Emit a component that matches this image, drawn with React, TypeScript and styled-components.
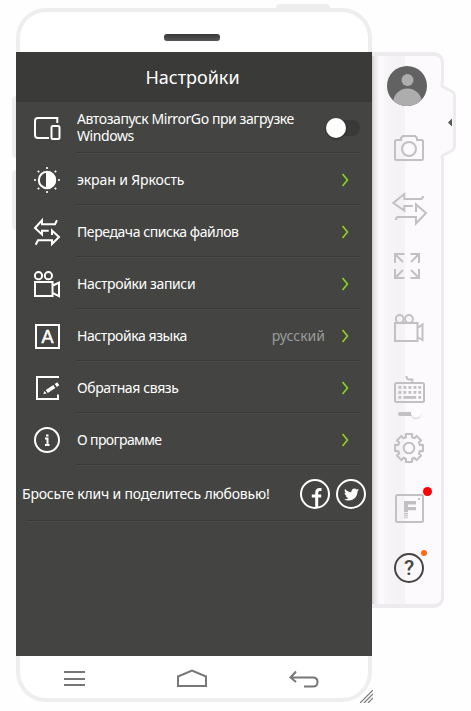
import React from 'react';
import styled, { createGlobalStyle } from 'styled-components';
import { FaTwitter } from 'react-icons/fa';

const GlobalStyle = createGlobalStyle`
* { box-sizing: border-box; }
body {
margin: 0;
background-color: #fefefe;
font-family: "Noto Sans", "Open Sans", sans-serif;
overflow: hidden;
}
svg { display: block; flex: none; }
`;
const Desktop = styled.div`
display: flex;
align-items: flex-start;
width: 471px;
height: 711px;
padding: 8px 0 0 16px;
`;
const Phone = styled.div`
position: relative;
display: flex;
flex-direction: column;
width: 356px;
height: 694px;
border-radius: 30px;
background-color: #fff;
box-shadow: inset 0 0 0 4px #eee;
`;
const SideButton = styled.div<{ $top: number; $height: number }>`
position: absolute;
left: -4px;
top: ${p => p.$top}px;
width: 4px;
height: ${p => p.$height}px;
border-radius: 4px 0 0 4px;
background-color: #eee;
`;
const PowerButton = styled.div`
position: absolute;
left: 260px;
top: -4px;
width: 54px;
height: 4px;
border-radius: 4px 4px 0 0;
background-color: #eee;
`;
const Forehead = styled.div`
display: flex;
justify-content: center;
height: 44px;
padding: 26px 4px 0 0;
`;
const Speaker = styled.div`
width: 56px;
height: 7px;
border-radius: 3px;
background: linear-gradient(#383838, #555);
`;
const Screen = styled.div`
position: relative;
height: 604px;
background-color: #444542;
`;
const Header = styled.div`
display: flex;
align-items: center;
justify-content: center;
height: 50px;
padding-right: 3px;
background-color: #3a3b38;
color: #fff;
font-size: 18px;
`;
const Row = styled.div`
display: flex;
align-items: center;
height: 52px;
padding: 0 11px 0 17px;
`;
const RowBody = styled.div`
display: flex;
align-items: center;
flex: 1;
height: 52px;
margin-left: 15px;
padding: 0 12px 0 1px;
border-bottom: 1px solid #4b4c49;
box-shadow: inset 0 -1px #393a38;
`;
const Label = styled.div<{ $spacing: number; $lift?: number }>`
flex: 1;
padding-bottom: ${p => p.$lift || 0}px;
color: #fff;
font-size: 14px;
line-height: 17px;
letter-spacing: ${p => p.$spacing}px;
white-space: pre;
`;
const Value = styled.div`
margin-right: 16px;
color: #9b9b9b;
font-size: 14px;
line-height: 17px;
`;
const Switch = styled.div`
display: flex;
align-items: center;
width: 34px;
height: 16px;
margin-right: -11px;
border-radius: 8px;
background-color: #393938;
`;
const Knob = styled.div`
width: 20px;
height: 20px;
border-radius: 50%;
background-color: #fff;
box-shadow: 0 1px 2px rgba(0, 0, 0, 0.4);
`;
const ShareRow = styled.div`
display: flex;
align-items: center;
gap: 6px;
height: 56px;
margin-left: 6px;
padding-right: 6px;
background: linear-gradient(#393a38, #393a38) 4px 54px / 335px 1px no-repeat, linear-gradient(#4b4c49, #4b4c49) 4px 55px / 335px 1px no-repeat;
`;
const SocialButton = styled.div`
display: flex;
align-items: center;
justify-content: center;
width: 30px;
height: 30px;
border: 2px solid #fff;
border-radius: 50%;
color: #fff;
`;
const NavBar = styled.div`
display: grid;
grid-template-columns: 113px 112px 30px;
align-items: center;
height: 46px;
padding-left: 48px;
`;
const Grip = styled.svg`
position: absolute;
right: -1px;
bottom: -1px;
`;
const Rail = styled.div`
position: relative;
display: flex;
flex-direction: column;
width: 72px;
height: 556px;
margin-top: 44px;
padding: 10px 0 0 19px;
border: solid #eeebee;
border-width: 4px 3px 4px 0;
border-radius: 0 10px 10px 0;
background: linear-gradient(90deg, #c9c8c9 0, #e6e4e6 2px, #f1eef1 5px, #fbf9fb 7px, #fdfafd 12px, #f8f5f8 12px, #f5f2f5 27px, #f6f3f6 33px, #fcf9fc 33px, #fdfafe 48px);
`;
const RailHandle = styled.svg`
position: absolute;
left: 68px;
top: 25px;
`;
const Avatar = styled.div`
width: 40px;
height: 40px;
margin-left: -4px;
`;
const RailItem = styled.div<{ $gap: number }>`
position: relative;
display: flex;
align-items: center;
justify-content: center;
flex: none;
width: 36px;
height: 36px;
margin-top: ${p => p.$gap}px;
`;
const MiniSwitch = styled.div`
display: flex;
align-items: center;
width: 20px;
height: 4px;
margin: 5px 0 -4px 7px;
border-radius: 2px;
background: linear-gradient(#c2c0c2, #c2c0c2) 0 0 / 14px 4px no-repeat;
`;
const MiniKnob = styled.div`
flex: none;
width: 10px;
height: 10px;
margin: -2px 0 0 13px;
border-radius: 50%;
background-color: #fff;
box-shadow: 0 1px 1px #ccc;
`;
const HelpRing = styled.div`
display: flex;
align-items: center;
justify-content: center;
width: 30px;
height: 30px;
border: 2px solid #444542;
border-radius: 50%;
color: #444542;
font: 500 21px/26px Roboto, sans-serif;
`;
const Dot = styled.div<{ $size: number; $color: string; $x: number; $y: number }>`
position: absolute;
left: ${p => p.$x}px;
top: ${p => p.$y}px;
width: ${p => p.$size}px;
height: ${p => p.$size}px;
border-radius: 50%;
background-color: ${p => p.$color};
`;

const RowIcon = ({ children }: { children: React.ReactNode }) => (
    <svg width="28" height="28" fill="none" stroke="#fff" strokeWidth="2">{children}</svg>
);
const RailIcon = ({ children }: { children: React.ReactNode }) => (
    <svg width="36" height="36" fill="none" stroke="#c2c0c2" strokeWidth="2">{children}</svg>
);
const Chevron = () => (
    <svg width="8" height="14" fill="none" stroke="#8fd41b" strokeWidth="1.6">
        <path d="M1.5 1l5 6-5 6" />
    </svg>
);

const DevicesIcon = () => (
    <RowIcon>
        <path d="M24.3 9V4H5a3 3 0 0 0-3 3V21a3 3 0 0 0 3 3h11" />
        <rect x="18.500" y="12" width="8" height="13" rx="1.5" />
    </RowIcon>
);
const rays = [0, 45, 90, 135, 180, 225, 270, 315];
const BrightnessIcon = () => (
    <RowIcon>
        <circle cx="14" cy="14" r="8.2" />
        <path d="M14 6a8 8 0 0 1 0 16z" fill="#fff" />
        {rays.map(a => (
            <rect key={a} x="13.1" y="1.1" width="1.8" height="1.8" fill="#fff" stroke="none" transform={`rotate(${a} 14 14)`} />
        ))}
    </RowIcon>
);
const TransferIcon = () => (
    <RowIcon>
        <path d="M24 2.3l-2 4H9v-4L2 10l7 6.5v-3.8h6.7M2.7 26.7l2.3-4.4h14V26l7-7-7-6.5V17" />
    </RowIcon>
);
const RecordIcon = () => (
    <RowIcon>
        <circle cx="5.5" cy="5.7" r="3.6" />
        <circle cx="15.4" cy="5.7" r="3.6" />
        <path d="M2 12h17.5v14H2zM20 15.5l6-3v13.7l-6-3" />
    </RowIcon>
);
const LanguageIcon = () => (
    <RowIcon>
        <rect x="3" y="3" width="23" height="23" />
        <text x="14.5" y="21" textAnchor="middle" fill="#fff" stroke="#fff" strokeWidth=".5" fontFamily="Liberation Sans, sans-serif" fontSize="18">A</text>
    </RowIcon>
);
const FeedbackIcon = () => (
    <RowIcon>
        <path d="M26 3H4v22h21v-4.5" />
        <path d="M13.8 17.5l7.5-5M22.8 11.5l2.5-1.7" strokeWidth="3.6" />
        <path d="M10.2 20l1.4-3 2 2.5z" fill="#fff" stroke="none" />
    </RowIcon>
);
const AboutIcon = () => (
    <RowIcon>
        <circle cx="14" cy="14" r="12" />
        <path d="M12 12.5h2.5V19M12 19h4.5M13 9.5h2.5" />
    </RowIcon>
);

const gearPath = () => {
    const points: string[] = [];
    for (let i = 0; i < 8; i++) {
        [[-15.5, 11.2], [-13, 14.3], [13, 14.3], [15.5, 11.2]].forEach(([deg, r]) => {
            const a = ((i * 45 + deg - 90) * Math.PI) / 180;
            points.push(`${(18 + r * Math.cos(a)).toFixed(2)} ${(18 + r * Math.sin(a)).toFixed(2)}`);
        });
    }
    return `M${points.join('L')}z`;
};
const keyColumns = [7.5, 12.5, 17.5, 22.5, 27.3];

const rows = [
    { label: 'экран и Яркость', icon: <BrightnessIcon />, spacing: -0.12 },
    { label: 'Передача списка файлов', icon: <TransferIcon />, spacing: -0.42 },
    { label: 'Настройки записи', icon: <RecordIcon />, spacing: -0.38 },
    { label: 'Настройка языка', icon: <LanguageIcon />, spacing: -0.42, value: 'русский' },
    { label: 'Обратная связь', icon: <FeedbackIcon />, spacing: -0.4 },
    { label: 'О программе', icon: <AboutIcon />, spacing: -0.62 },
];

const Settings = () => (
    <Screen>
        <Header>Настройки</Header>
        <Row>
            <DevicesIcon />
            <RowBody>
                <Label $spacing={-0.42} $lift={2}>{'Автозапуск MirrorGo при загрузке\nWindows'}</Label>
                <Switch><Knob /></Switch>
            </RowBody>
        </Row>
        {rows.map(row => (
            <Row key={row.label}>
                {row.icon}
                <RowBody>
                    <Label $spacing={row.spacing}>{row.label}</Label>
                    {row.value && <Value>{row.value}</Value>}
                    <Chevron />
                </RowBody>
            </Row>
        ))}
        <ShareRow>
            <Label $spacing={-0.19} $lift={2}>Бросьте клич и поделитесь любовью!</Label>
            <SocialButton>
                <svg width="26" height="26" fill="none" stroke="#fff" strokeWidth="3">
                    <path d="M19.5 8.5h-1.8q-3 0-3 3.2V26M9.8 15h9.4" />
                </svg>
            </SocialButton>
            <SocialButton><FaTwitter size={15} /></SocialButton>
        </ShareRow>
    </Screen>
);

const SideRail = () => (
    <Rail>
        <RailHandle width="16" height="82">
            <path d="M0 4L4 6 12 10.500Q14.500 12 14.500 15V65Q14.500 68 12 69.500L4 74 0 77z" fill="#fdfafe" />
            <path d="M2 2v3L12 10.500Q14.500 12 14.500 15V65Q14.500 68 12 69.500L2 75v3" fill="none" stroke="#eeebee" strokeWidth="3" />
            <path d="M8 41.500l4-4v8z" fill="#555" />
        </RailHandle>
        <Avatar>
            <svg width="40" height="40">
                <clipPath id="face"><circle cx="20" cy="20" r="20" /></clipPath>
                <g clipPath="url(#face)">
                    <rect width="40" height="40" fill="#626262" />
                    <circle cx="20.500" cy="14" r="6" fill="#adadad" />
                    <circle cx="20.500" cy="37" r="14.500" fill="#adadad" />
                </g>
            </svg>
        </Avatar>
        <RailItem $gap={24}>
            <RailIcon>
                <path d="M5.500 10H10V8l2-2h12l2 2v2h4.500a1.500 1.500 0 0 1 1.500 1.500v17a1.500 1.500 0 0 1-1.500 1.500h-25A1.500 1.500 0 0 1 4 28.500v-17A1.500 1.500 0 0 1 5.500 10z" />
                <circle cx="18" cy="19" r="7" />
            </RailIcon>
        </RailItem>
        <RailItem $gap={24}>
            <RailIcon>
                <path d="M32 6q0 3-2.500 3H13.300V4L2.300 13l11 7.500V16h8.500M5 30q0-3 2-3h18v6.500L35 23l-10-8.500V22" />
            </RailIcon>
        </RailItem>
        <RailItem $gap={22}>
            <RailIcon>
                <path d="M13.500 6H4v9M4 6l8 8M19.500 6H28v9M28 6l-8 8M4 21v9h9.500M4 30l8-8M28 21v9h-8.500M28 30l-8-8" />
            </RailIcon>
        </RailItem>
        <RailItem $gap={26}>
            <RailIcon>
                <circle cx="8.700" cy="9" r="3.900" />
                <circle cx="18" cy="9" r="3.900" />
                <path d="M4 13h22.500v18H4zM26.500 18l5-3.500V30l-5-3" />
            </RailIcon>
        </RailItem>
        <RailItem $gap={25}>
            <RailIcon>
                <rect x="4" y="12" width="29" height="19" rx="1.500" />
                <path d="M21.300 12V8.500H17.500q-2-.500-2-3.500" />
                <g fill="#c2c0c2" stroke="none">
                    {keyColumns.map(x => <rect key={x} x={x} y="15" width="2.800" height="2.800" />)}
                    {keyColumns.map(x => <rect key={x} x={x} y="20" width="2.800" height="2.800" />)}
                    <rect x="7.500" y="25" width="2.800" height="2.800" />
                    <rect x="12.500" y="25" width="12.700" height="2.800" />
                    <rect x="27.300" y="25" width="2.800" height="2.800" />
                </g>
            </RailIcon>
        </RailItem>
        <MiniSwitch><MiniKnob /></MiniSwitch>
        <RailItem $gap={18}>
            <RailIcon>
                <path d={gearPath()} strokeLinejoin="round" />
                <circle cx="18" cy="18" r="5.300" />
            </RailIcon>
        </RailItem>
        <RailItem $gap={24}>
            <RailIcon>
                <rect x="5" y="5" width="27" height="27" rx="1.500" />
                <g fill="#c2c0c2" stroke="none">
                    <path d="M13 11h12v3.500h-8V17h8v3.200h-8V22h-4z" />
                    <rect x="13" y="22.800" width="4" height="1.600" />
                    <rect x="13" y="25.200" width="4" height="1.200" />
                    <rect x="13" y="27.300" width="4" height=".9" />
                    <rect x="27" y="8" width="2" height="2" />
                </g>
            </RailIcon>
            <Dot $size={9} $color="#f00" $x={32} $y={-3} />
        </RailItem>
        <RailItem $gap={24}>
            <HelpRing>?</HelpRing>
            <Dot $size={6} $color="#ff6a0d" $x={30} $y={0} />
        </RailItem>
    </Rail>
);

const App = () => (
    <>
        <GlobalStyle />
        <Desktop>
            <Phone>
                <SideButton $top={88} $height={62} />
                <SideButton $top={162} $height={60} />
                <PowerButton />
                <Forehead><Speaker /></Forehead>
                <Settings />
                <NavBar>
                    <svg width="21" height="20" stroke="#777" strokeWidth="2">
                        <path d="M0 3h21M0 10h21M0 16h21" />
                    </svg>
                    <svg width="30" height="20" fill="none" stroke="#777" strokeWidth="2">
                        <path d="M1 7.500l14-6 14 6V17H1z" />
                    </svg>
                    <svg width="30" height="20" fill="none" stroke="#777" strokeWidth="2">
                        <path d="M7 2.500L1.500 8.500 7 13M2 8.500h22q4.500 0 4.500 4.500t-4.500 4.500h-9" />
                    </svg>
                </NavBar>
                <Grip width="13" height="13" stroke="#777" strokeWidth="1.2">
                    <path d="M0 13L13 0M4 13l9-9M8 13l5-5" />
                </Grip>
            </Phone>
            <SideRail />
        </Desktop>
    </>
);

export default App;
